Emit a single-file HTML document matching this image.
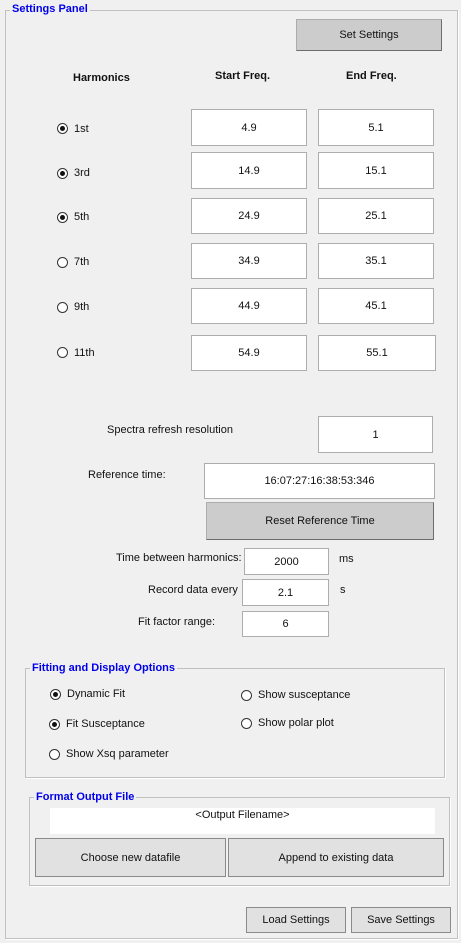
<!DOCTYPE html><html><head><style>
body{margin:0;width:461px;height:943px;background:#f0f0f0;position:relative;overflow:hidden;font-family:"Liberation Sans",Arial,sans-serif;font-size:11px;color:#111}
.a{position:absolute}
.t{position:absolute;white-space:nowrap}
.box{position:absolute;background:#fff;border:1px solid #adadad;box-sizing:border-box;display:flex;align-items:center;justify-content:center}
.btn{position:absolute;background:#cccccc;border:1px solid #adadad;border-right-color:#6d6d6d;border-bottom-color:#6d6d6d;box-sizing:border-box;display:flex;align-items:center;justify-content:center}
.btn2{position:absolute;background:#e1e1e1;border:1px solid #8a8a8a;box-sizing:border-box;display:flex;align-items:center;justify-content:center}
.fr{position:absolute;border:1px solid #b0b0b0;border-right-color:#fff;border-bottom-color:#fff;box-shadow:1px 1px 0 #b0b0b0 inset}
.grp{position:absolute;border:1px solid #c0c0c0;box-shadow:1px 1px 0 #fff}
.ttl{position:absolute;background:#f0f0f0;color:#0000ee;font-weight:bold;padding:0 2px;font-size:11px}
.r{position:absolute;width:11px;height:11px;border:1px solid #333;border-radius:50%;background:#fff;box-sizing:border-box}
.r.on::after{content:"";position:absolute;left:2px;top:2px;width:5px;height:5px;border-radius:50%;background:#111}
b{font-weight:bold}
</style></head><body>
<div class="grp" style="left:5px;top:10px;width:451px;height:927px"></div>
<div class="ttl" style="left:10px;top:3px">Settings Panel</div>
<div class="btn" style="left:296px;top:19px;width:146px;height:32px">Set Settings</div>
<div class="t" style="left:73px;top:72px"><b>Harmonics</b></div>
<div class="t" style="left:215px;top:70px"><b>Start Freq.</b></div>
<div class="t" style="left:346px;top:70px"><b>End Freq.</b></div>

<div class="r on" style="left:57px;top:123px"></div><div class="t" style="left:74px;top:123px">1st</div>
<div class="box" style="left:191px;top:109px;width:116px;height:37px">4.9</div>
<div class="box" style="left:318px;top:109px;width:116px;height:37px">5.1</div>
<div class="r on" style="left:57px;top:168px"></div><div class="t" style="left:74px;top:167px">3rd</div>
<div class="box" style="left:191px;top:152px;width:116px;height:37px">14.9</div>
<div class="box" style="left:318px;top:152px;width:116px;height:37px">15.1</div>
<div class="r on" style="left:57px;top:212px"></div><div class="t" style="left:74px;top:211px">5th</div>
<div class="box" style="left:191px;top:198px;width:116px;height:36px">24.9</div>
<div class="box" style="left:318px;top:198px;width:116px;height:36px">25.1</div>
<div class="r" style="left:57px;top:257px"></div><div class="t" style="left:74px;top:256px">7th</div>
<div class="box" style="left:191px;top:243px;width:116px;height:36px">34.9</div>
<div class="box" style="left:318px;top:243px;width:116px;height:36px">35.1</div>
<div class="r" style="left:57px;top:302px"></div><div class="t" style="left:74px;top:301px">9th</div>
<div class="box" style="left:191px;top:288px;width:116px;height:36px">44.9</div>
<div class="box" style="left:318px;top:288px;width:116px;height:36px">45.1</div>
<div class="r" style="left:57px;top:347px"></div><div class="t" style="left:74px;top:347px">11th</div>
<div class="box" style="left:191px;top:335px;width:116px;height:36px">54.9</div>
<div class="box" style="left:318px;top:335px;width:118px;height:36px">55.1</div>

<div class="t" style="left:107px;top:424px">Spectra refresh resolution</div>
<div class="box" style="left:318px;top:416px;width:115px;height:37px">1</div>
<div class="t" style="left:88px;top:469px">Reference time:</div>
<div class="box" style="left:204px;top:463px;width:231px;height:36px">16:07:27:16:38:53:346</div>
<div class="btn" style="left:206px;top:502px;width:228px;height:38px">Reset Reference Time</div>
<div class="t" style="left:116px;top:552px">Time between harmonics:</div>
<div class="box" style="left:244px;top:548px;width:85px;height:27px">2000</div>
<div class="t" style="left:339px;top:553px">ms</div>
<div class="t" style="left:148px;top:584px">Record data every</div>
<div class="box" style="left:242px;top:579px;width:87px;height:27px">2.1</div>
<div class="t" style="left:340px;top:584px">s</div>
<div class="t" style="left:138px;top:616px">Fit factor range:</div>
<div class="box" style="left:242px;top:611px;width:87px;height:26px">6</div>

<div class="grp" style="left:25px;top:668px;width:418px;height:108px"></div>
<div class="ttl" style="left:30px;top:662px">Fitting and Display Options</div>
<div class="r on" style="left:50px;top:689px"></div><div class="t" style="left:67px;top:688px">Dynamic Fit</div>
<div class="r on" style="left:49px;top:719px"></div><div class="t" style="left:66px;top:718px">Fit Susceptance</div>
<div class="r" style="left:49px;top:749px"></div><div class="t" style="left:66px;top:748px">Show Xsq parameter</div>
<div class="r" style="left:241px;top:690px"></div><div class="t" style="left:258px;top:689px">Show susceptance</div>
<div class="r" style="left:241px;top:718px"></div><div class="t" style="left:258px;top:717px">Show polar plot</div>

<div class="grp" style="left:29px;top:797px;width:419px;height:87px"></div>
<div class="ttl" style="left:34px;top:791px">Format Output File</div>
<div class="a" style="left:50px;top:808px;width:385px;height:26px;background:#fff"></div>
<div class="t" style="left:0;width:485px;text-align:center;top:809px">&lt;Output Filename&gt;</div>
<div class="btn2" style="left:35px;top:838px;width:191px;height:39px">Choose new datafile</div>
<div class="btn2" style="left:228px;top:838px;width:216px;height:39px">Append to existing data</div>

<div class="btn2" style="left:246px;top:907px;width:100px;height:26px">Load Settings</div>
<div class="btn2" style="left:351px;top:907px;width:100px;height:26px">Save Settings</div>
</body></html>
